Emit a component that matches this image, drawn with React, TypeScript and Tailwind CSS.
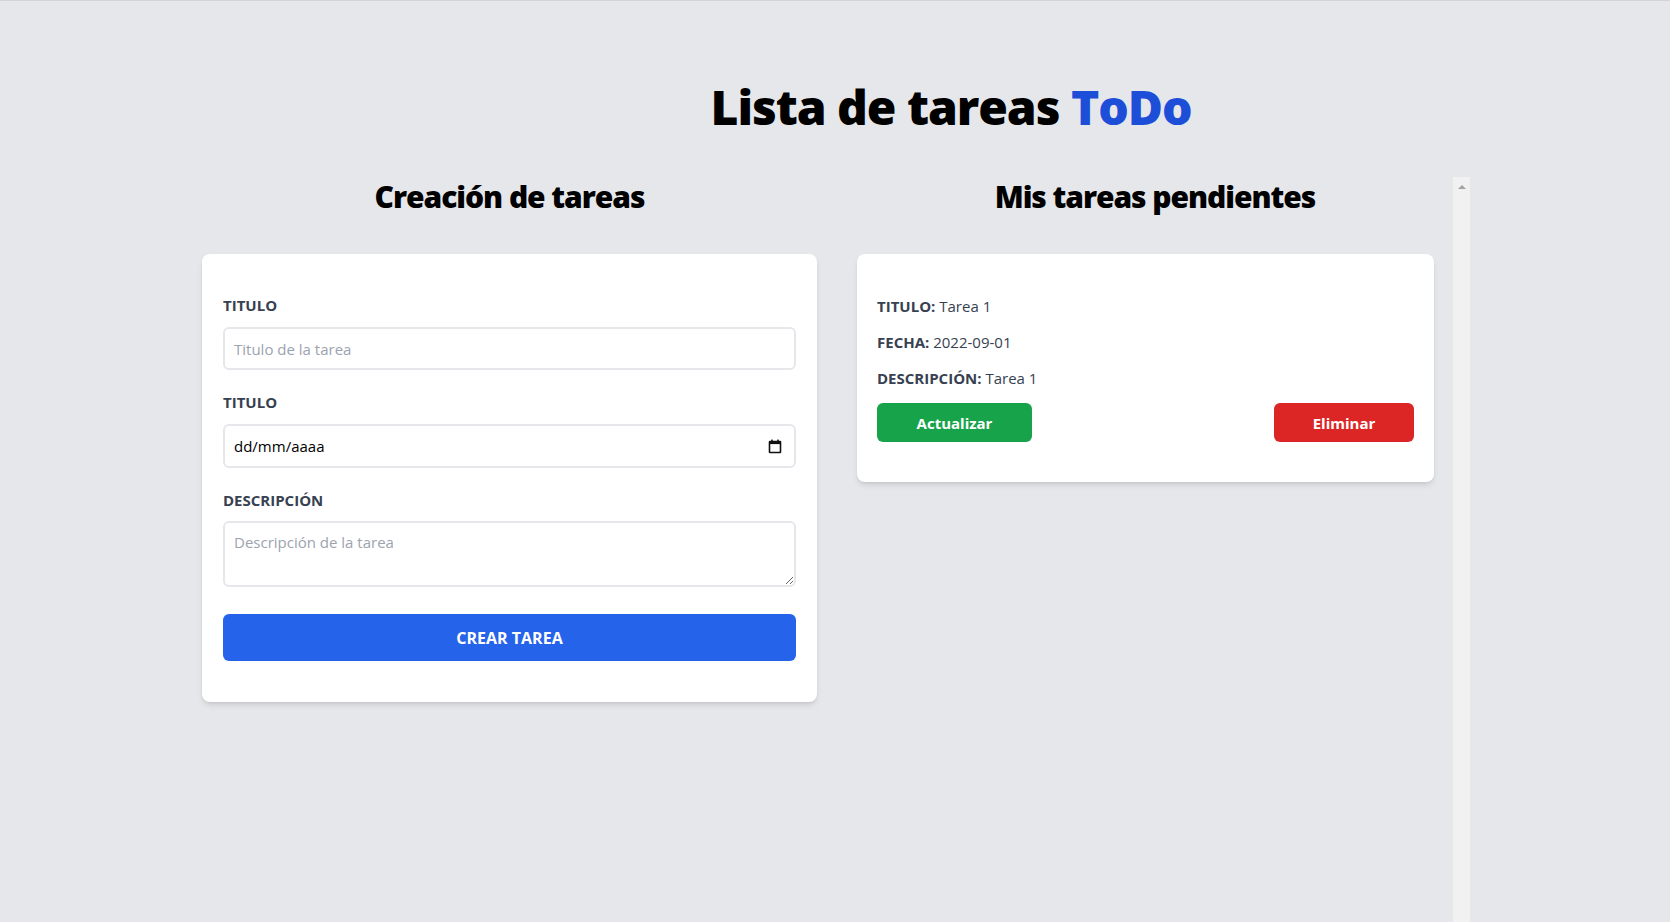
import React from 'react';

const CalendarIcon: React.FC = () => (
  <svg width="14" height="15" viewBox="0 0 14 15" fill="none">
    <rect x="1.5" y="2.5" width="11" height="11" rx="0.5" stroke="#111" strokeWidth="1.6" />
    <rect x="1.5" y="2.5" width="11" height="2.6" fill="#111" />
    <rect x="3.2" y="0.6" width="1.6" height="2.4" fill="#111" />
    <rect x="9.2" y="0.6" width="1.6" height="2.4" fill="#111" />
  </svg>
);

const Label: React.FC<{ children: React.ReactNode }> = ({ children }) => (
  <label className="block text-[15px] leading-5 font-bold text-[#374151]">{children}</label>
);

const CreateForm: React.FC = () => (
  <div className="bg-white rounded-lg shadow-md px-[21px] pt-[41px] pb-[41px]">
    <Label>TITULO</Label>
    <input
      type="text"
      placeholder="Titulo de la tarea"
      className="mt-3 block w-full h-[43px] rounded-md border-2 border-[#e5e7eb] px-[9px] text-[15px] text-gray-800 placeholder:text-[#9ca3af] outline-none"
    />

    <div className="mt-[22px]">
      <Label>TITULO</Label>
    </div>
    <div className="mt-3 flex items-center justify-between h-[44px] rounded-md border-2 border-[#e5e7eb] pl-[9px] pr-[12px] text-[15px] text-black">
      <span>dd/mm/aaaa</span>
      <CalendarIcon />
    </div>

    <div className="mt-[22px]">
      <Label>DESCRIPCIÓN</Label>
    </div>
    <textarea
      placeholder="Descripción de la tarea"
      className="mt-[11px] block w-full h-[66px] rounded-md border-2 border-[#e5e7eb] px-[9px] py-[8px] text-[15px] text-gray-800 placeholder:text-[#9ca3af] outline-none"
    />

    <button className="mt-[27px] w-full h-[47px] rounded-md bg-[#2563eb] text-white text-[16px] font-bold">
      CREAR TAREA
    </button>
  </div>
);

const TaskCard: React.FC = () => (
  <div className="w-[577px] bg-white rounded-lg shadow-md px-5 pt-[42px] pb-[40px] text-[15px] leading-5 text-[#374151]">
    <p><span className="font-bold">TITULO:</span> Tarea 1</p>
    <p className="mt-4"><span className="font-bold">FECHA:</span> 2022-09-01</p>
    <p className="mt-4"><span className="font-bold">DESCRIPCIÓN:</span> Tarea 1</p>
    <div className="mt-[15px] flex items-center justify-between">
      <button className="w-[155px] h-[39px] rounded-md bg-[#16a34a] text-white text-[15px] font-bold">Actualizar</button>
      <button className="w-[140px] h-[39px] rounded-md bg-[#dc2626] text-white text-[15px] font-bold">Eliminar</button>
    </div>
  </div>
);

export default function App() {
  return (
    <div className="h-screen overflow-hidden bg-[#e5e7eb] border-t border-[#d4d4d8] font-['Open_Sans',sans-serif]">
      <div className="pt-[82px] flex justify-center pl-[232px]">
        <h1 className="text-5xl leading-none font-black tracking-[-0.022em] text-black">
          Lista de tareas <span className="text-[#1d4ed8]">ToDo</span>
        </h1>
      </div>

      <div className="mt-[46px] flex items-start gap-[40px] pl-[202px]">
        {/* Columna de creación */}
        <div className="w-[615px] pt-[2px]">
          <h2 className="text-3xl font-black tracking-[-0.035em] text-center text-black">Creación de tareas</h2>
          <div className="mt-[39px]">
            <CreateForm />
          </div>
        </div>

        {/* Columna con scroll */}
        <div className="w-[613px] h-[745px] flex">
          <div className="w-[596px] pt-[2px]">
            <h2 className="text-3xl font-black tracking-[-0.035em] text-center text-black">Mis tareas pendientes</h2>
            <div className="mt-[39px]">
              <TaskCard />
            </div>
          </div>
          <div className="w-[17px] bg-[#f1f1f1] flex justify-center pt-[8px]">
            <div className="w-0 h-0 border-l-[4px] border-r-[4px] border-b-[4px] border-l-transparent border-r-transparent border-b-[#a3a3a3]" />
          </div>
        </div>
      </div>
    </div>
  );
}
